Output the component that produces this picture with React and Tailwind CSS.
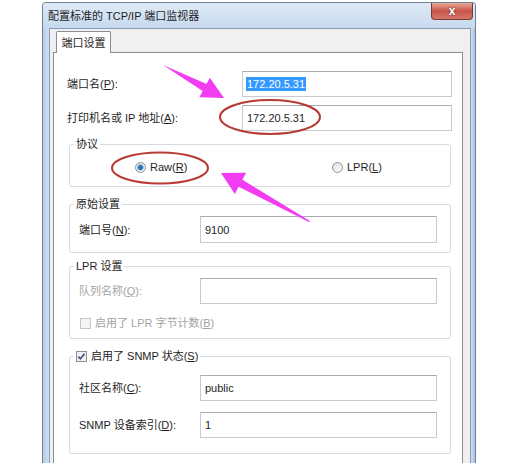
import React from "react";

const Key = ({ k }) => <span className="underline">{k}</span>;

const Field = ({ children, selected }) => (
  <div className="flex-1 h-full bg-white border border-[#c7cbd1] border-t-[#a9acb3] flex items-center pl-[3px]">
    {selected ? (
      <span className="bg-[#3399ff] text-white px-[1px] leading-[14px]">{children}</span>
    ) : (
      <span className="pl-[1px]">{children}</span>
    )}
  </div>
);

const Radio = ({ on }) => (
  <svg width="11" height="11" viewBox="0 0 11 11" className="shrink-0">
    <defs>
      <linearGradient id={on ? "rOn" : "rOff"} x1="0" y1="0" x2="1" y2="1">
        <stop offset="0" stopColor="#d9dde3" />
        <stop offset="1" stopColor="#ffffff" />
      </linearGradient>
    </defs>
    <circle cx="5.5" cy="5.5" r="5" fill={`url(#${on ? "rOn" : "rOff"})`} stroke="#8b929c" />
    {on && <circle cx="5.5" cy="5.5" r="2.8" fill="#2b6cb3" stroke="#7fb0e0" strokeWidth="0.8" />}
  </svg>
);

const Check = ({ on, disabled }) => (
  <svg width="11" height="11" viewBox="0 0 11 11" className="shrink-0">
    <rect
      x="0.5"
      y="0.5"
      width="10"
      height="10"
      fill={disabled ? "#f4f4f4" : "#eef0f3"}
      stroke={disabled ? "#c4c4c4" : "#8e8f8f"}
    />
    {on && (
      <path d="M2.3 5.6 L4.4 7.8 L8.6 2.8" fill="none" stroke="#3b4f86" strokeWidth="1.6" />
    )}
  </svg>
);

const Group = ({ legend, children, className }) => (
  <div className={"ml-[15px] mr-[11px] border border-[#d5dbe0] rounded-[3px] " + className}>
    <div className="-mt-[8px] ml-[4px] w-fit px-[2px] h-[14px] leading-[14px] bg-white flex items-center gap-[4px]">
      {legend}
    </div>
    {children}
  </div>
);

export default function App() {
  return (
    <div className="relative w-[511px] h-[475px] bg-white overflow-hidden text-[11px] leading-[14px] text-[#1e1e1e] font-['Liberation_Sans','Noto_Sans_CJK_SC',sans-serif]">
      <div className="ml-[42px] mt-[2px] w-[434px] h-[461px] flex flex-col border-x border-t border-[#6f8096] rounded-t-[4px] overflow-hidden">
        {/* title bar */}
        <div className="h-[25px] flex items-start bg-gradient-to-b from-[#dfeaf6] via-[#d3e2f3] to-[#c6d9ee]">
          <div className="pl-[5px] pt-[6px]">配置标准的 TCP/IP 端口监视器</div>
          <div className="ml-auto mr-[2px] w-[42px] h-[17px] rounded-b-[4px] border border-t-0 border-[#7a3b34] bg-gradient-to-b from-[#e9a898] via-[#c9554a] to-[#d5786a] flex items-center justify-center">
            <span className="text-white font-bold text-[12px] leading-[12px] [text-shadow:0_0_2px_#5a1e18]">x</span>
          </div>
        </div>

        <div className="flex flex-1 min-h-0">
          <div className="w-[6px] bg-gradient-to-r from-[#b7cde6] to-[#cfdff0]" />
          <div className="w-[422px] bg-[#f0f0f0] border border-b-0 border-[#8a9cb3] pl-[3px] pt-[2px] flex flex-col">
            {/* tab */}
            <div className="ml-[3px] w-[55px] h-[22px] -mb-[1px] relative z-10 bg-white border border-b-0 border-[#898c95] rounded-t-[2px] flex items-center justify-center">
              端口设置
            </div>
            {/* panel */}
            <div className="w-[410px] flex-1 bg-white border border-b-0 border-[#898c95]">
              <div className="mt-[18px] h-[26px] flex items-center pl-[13px] pr-[10px]">
                <div className="w-[175px]">
                  端口名(<Key k="P" />):
                </div>
                <Field selected>172.20.5.31</Field>
              </div>
              <div className="mt-[8px] h-[26px] flex items-center pl-[13px] pr-[10px]">
                <div className="w-[175px]">
                  打印机名或 IP 地址(<Key k="A" />):
                </div>
                <Field>172.20.5.31</Field>
              </div>

              <Group legend="协议" className="mt-[13px] pb-[12px]">
                <div className="mt-[9px] h-[14px] flex items-center pl-[65px]">
                  <div className="w-[197px] flex items-center gap-[4px]">
                    <Radio on />
                    <span>
                      Raw(<Key k="R" />)
                    </span>
                  </div>
                  <div className="flex items-center gap-[4px]">
                    <Radio />
                    <span>
                      LPR(<Key k="L" />)
                    </span>
                  </div>
                </div>
              </Group>

              <Group legend="原始设置" className="mt-[17px] pb-[9px]">
                <div className="mt-[5px] h-[27px] flex items-center pl-[9px] pr-[13px]">
                  <div className="w-[121px]">
                    端口号(<Key k="N" />):
                  </div>
                  <Field>9100</Field>
                </div>
              </Group>

              <Group legend="LPR 设置" className="mt-[13px] pb-[8px]">
                <div className="mt-[5px] h-[26px] flex items-center pl-[9px] pr-[13px]">
                  <div className="w-[121px] text-[#a3a3a3]">
                    队列名称(<Key k="Q" />):
                  </div>
                  <Field></Field>
                </div>
                <div className="mt-[12px] h-[14px] flex items-center gap-[4px] pl-[10px] text-[#a3a3a3]">
                  <Check disabled />
                  <span>
                    启用了 LPR 字节计数(<Key k="B" />)
                  </span>
                </div>
              </Group>

              <Group
                legend={
                  <>
                    <Check on />
                    <span>
                      启用了 SNMP 状态(<Key k="S" />)
                    </span>
                  </>
                }
                className="mt-[17px] pb-[15px]"
              >
                <div className="mt-[12px] h-[26px] flex items-center pl-[9px] pr-[13px]">
                  <div className="w-[121px]">
                    社区名称(<Key k="C" />):
                  </div>
                  <Field>public</Field>
                </div>
                <div className="mt-[11px] h-[26px] flex items-center pl-[9px] pr-[13px]">
                  <div className="w-[121px]">
                    SNMP 设备索引(<Key k="D" />):
                  </div>
                  <Field>1</Field>
                </div>
              </Group>
            </div>
          </div>
          <div className="flex-1 bg-gradient-to-r from-[#cfdff0] to-[#a9c3e2]" />
        </div>
      </div>

      {/* annotations drawn over the screenshot */}
      <svg
        className="absolute inset-0 pointer-events-none"
        width="511"
        height="475"
        viewBox="0 0 511 475"
      >
        <polygon
          points="163,65 206.5,84 209.8,77.8 224,98 199.4,97.2 202.7,91"
          fill="#f23cf2"
        />
        <polygon
          points="310,221 242.4,179.8 246.1,172.7 221,173 234.9,193.9 238.6,186.8 309,222"
          fill="#f23cf2"
        />
        <ellipse cx="270" cy="117" rx="50" ry="17" fill="none" stroke="#b73a33" strokeWidth="2" />
        <ellipse cx="160" cy="168" rx="48" ry="15.5" fill="none" stroke="#b73a33" strokeWidth="2" />
      </svg>
    </div>
  );
}
